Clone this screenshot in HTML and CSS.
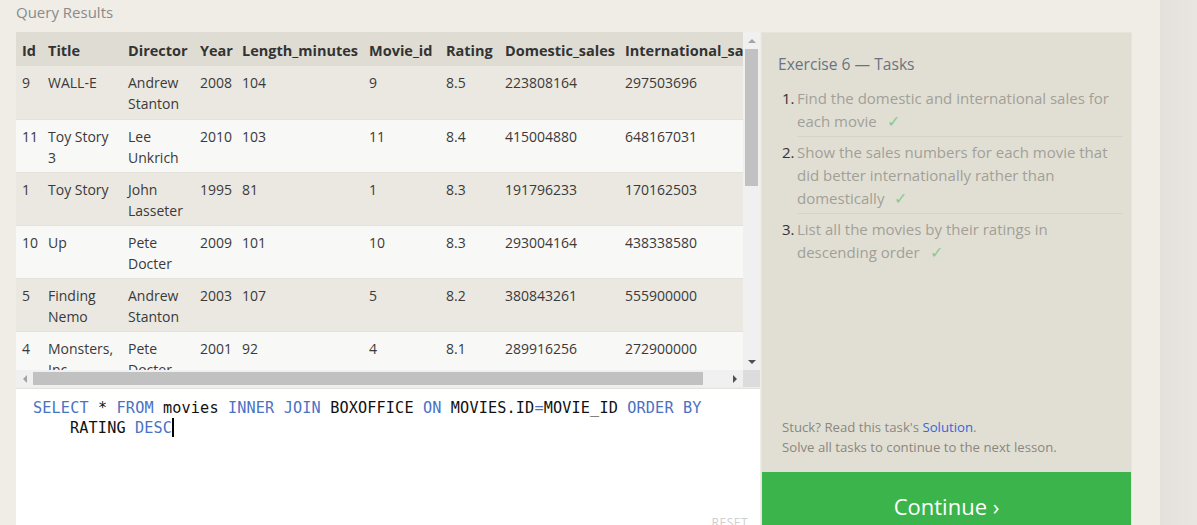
FILE: index.html
```html
<!DOCTYPE html>
<html>
<head>
<meta charset="utf-8">
<link rel="stylesheet" href="styles.css">
</head>
<body>
<div class="page">
  <div class="main">
    <div class="label">Query Results</div>
    <div class="work">
      <div class="left">
        <div class="results">
          <div class="viewport">
            <table class="tbl">
              <colgroup>
                <col style="width:26px"><col style="width:80px"><col style="width:72px"><col style="width:42px"><col style="width:127px"><col style="width:77px"><col style="width:59px"><col style="width:120px"><col style="width:150px">
              </colgroup>
              <thead>
                <tr><th>Id</th><th>Title</th><th>Director</th><th>Year</th><th>Length_minutes</th><th>Movie_id</th><th>Rating</th><th>Domestic_sales</th><th>International_sales</th></tr>
              </thead>
              <tbody>
                <tr><td>9</td><td>WALL-E</td><td>Andrew Stanton</td><td>2008</td><td>104</td><td>9</td><td>8.5</td><td>223808164</td><td>297503696</td></tr>
                <tr><td>11</td><td>Toy Story 3</td><td>Lee Unkrich</td><td>2010</td><td>103</td><td>11</td><td>8.4</td><td>415004880</td><td>648167031</td></tr>
                <tr><td>1</td><td>Toy Story</td><td>John Lasseter</td><td>1995</td><td>81</td><td>1</td><td>8.3</td><td>191796233</td><td>170162503</td></tr>
                <tr><td>10</td><td>Up</td><td>Pete Docter</td><td>2009</td><td>101</td><td>10</td><td>8.3</td><td>293004164</td><td>438338580</td></tr>
                <tr><td>5</td><td>Finding Nemo</td><td>Andrew Stanton</td><td>2003</td><td>107</td><td>5</td><td>8.2</td><td>380843261</td><td>555900000</td></tr>
                <tr><td>4</td><td>Monsters, Inc.</td><td>Pete Docter</td><td>2001</td><td>92</td><td>4</td><td>8.1</td><td>289916256</td><td>272900000</td></tr>
              </tbody>
            </table>
          </div>
          <div class="vbar">
            <div class="arrow up"></div>
            <div class="vtrack"><div class="vthumb"></div></div>
            <div class="arrow down"></div>
          </div>
          <div class="hbar">
            <div class="arrow left-a"></div>
            <div class="htrack"><div class="hthumb"></div></div>
            <div class="arrow right-a"></div>
          </div>
          <div class="corner"></div>
        </div>
        <div class="editor">
          <div class="code"><span class="kw">SELECT</span> * <span class="kw">FROM</span> movies <span class="kw">INNER</span> <span class="kw">JOIN</span> BOXOFFICE <span class="kw">ON</span> MOVIES.ID<span class="kw">=</span>MOVIE_ID <span class="kw">ORDER</span> <span class="kw">BY</span><br><span class="indent">RATING <span class="kw">DESC</span><span class="caret"></span></span></div>
          <div class="reset">RESET</div>
        </div>
      </div>
      <div class="tasks">
        <div class="tasks-body">
          <h2 class="tasks-title">Exercise 6 — Tasks</h2>
          <ol class="task-list">
            <li><span class="tn">1.</span><span class="tt">Find the domestic and international sales for each movie <span class="check">✓</span></span></li>
            <li><span class="tn">2.</span><span class="tt">Show the sales numbers for each movie that did better internationally rather than domestically <span class="check">✓</span></span></li>
            <li><span class="tn">3.</span><span class="tt">List all the movies by their ratings in descending order <span class="check">✓</span></span></li>
          </ol>
        </div>
        <div class="tasks-foot">
          <p>Stuck? Read this task's <a class="sol">Solution</a>.</p>
          <p>Solve all tasks to continue to the next lesson.</p>
        </div>
        <div class="continue">Continue ›</div>
      </div>
    </div>
  </div>
</div>
</body>
</html>
```
FILE: styles.css
```css
html, body { margin: 0; padding: 0; }
body {
  width: 1197px; height: 525px; overflow: hidden;
  background: #efede6;
  font-family: "Open Sans", "Noto Sans", sans-serif;
}
.page { display: flex; height: 525px; }
.main { width: 1132px; padding-left: 16px; box-sizing: border-box; display: flex; flex-direction: column; }
.label { height: 32px; line-height: 24px; font-size: 15px; color: #8a8a8a; }
.work { display: flex; flex: 1; min-height: 0; }
.left { width: 744px; display: flex; flex-direction: column; }
.results {
  display: grid;
  grid-template-columns: 727px 17px;
  grid-template-rows: 338px 17px;
  height: 356px;
  border-bottom: 1px solid #e4e2dc;
}
.viewport { overflow: hidden; background: #f8f8f7; }
.tbl { border-collapse: collapse; table-layout: fixed; width: 753px; font-size: 14px; color: #3a3a3a; }
.tbl th {
  background: #dfddd3; text-align: left; font-weight: 700; color: #333; font-size: 14.5px;
  height: 34px; padding: 2px 0 0 6px; white-space: nowrap; overflow: hidden; box-sizing: border-box;
}
.tbl td {
  vertical-align: top; padding: 6px 4px 0 6px; height: 53px; box-sizing: border-box;
  line-height: 21px; border-bottom: 1px solid #e3e1da;
}
.tbl tbody tr:nth-child(odd) td { background: #eae8e1; }
.tbl tbody tr:nth-child(even) td { background: #f8f8f7; }
.vbar { background: #f0f0f0; display: flex; flex-direction: column; align-items: center; }
.vtrack { flex: 1; width: 100%; padding: 0 2px; box-sizing: border-box; }
.vthumb { height: 137px; background: #c1c1c1; }
.hbar { background: #f0f0f0; display: flex; align-items: center; }
.htrack { flex: 1; height: 100%; padding: 2px 0; box-sizing: border-box; }
.hthumb { width: 670px; height: 100%; background: #c1c1c1; }
.corner { background: #dcdcdc; }
.arrow { width: 17px; height: 17px; position: relative; flex: none; }
.arrow::after { content: ""; position: absolute; left: 50%; top: 50%; width: 0; height: 0; }
.up::after { border-left: 4px solid transparent; border-right: 4px solid transparent; border-bottom: 4px solid #a3a3a3; transform: translate(-50%, -50%); }
.down::after { border-left: 4px solid transparent; border-right: 4px solid transparent; border-top: 4px solid #505050; transform: translate(-50%, -50%); }
.left-a::after { border-top: 4px solid transparent; border-bottom: 4px solid transparent; border-right: 4px solid #a3a3a3; transform: translate(-50%, -50%); }
.right-a::after { border-top: 4px solid transparent; border-bottom: 4px solid transparent; border-left: 4px solid #505050; transform: translate(-50%, -50%); }
.editor {
  flex: 1; background: #fff; position: relative;
  padding: 9px 30px 0 17px;
}
.code {
  font-family: "DejaVu Sans Mono", "Liberation Mono", monospace;
  font-size: 15.2px; line-height: 20px; color: #111; letter-spacing: 0.14px;
  width: 700px;
}
.kw { color: #4a72c4; }
.indent { padding-left: 37px; }
.caret { display: inline-block; width: 2px; height: 19px; background: #000; vertical-align: -4px; }
.reset { position: absolute; right: 12px; bottom: -6px; font-size: 12px; color: #cfcfcf; letter-spacing: 0.5px; }
.tasks {
  width: 371px; margin-left: 1px; background: #e1dfd4;
  border: 1px solid #e6e4dc; border-bottom: none; box-sizing: border-box;
  display: flex; flex-direction: column;
}
.tasks-body { flex: 1; padding: 18px 8px 0 16px; }
.tasks-title { margin: 0 0 10px 0; font-weight: 400; font-size: 15.6px; line-height: 26px; color: #6c7380; }
.task-list { list-style: none; margin: 0; padding: 0 0 0 4px; }
.task-list li { display: flex; font-size: 15px; line-height: 23px; color: #a19f98; }
.tn { width: 15px; flex: none; color: #333; }
.tt { flex: 1; padding-bottom: 3px; }
.task-list li + li .tt { border-top: 1px solid #d5d3ca; padding-top: 4px; }
.task-list li + li .tn { padding-top: 5px; }
.check { color: #8cc891; margin-left: 6px; font-size: 16px; }
.tasks-foot { padding: 0 0 15px 20px; font-size: 13.2px; line-height: 20px; color: #8a8780; }
.tasks-foot p { margin: 0; }
.sol { color: #3566d8; }
.continue {
  height: 53px; background: #3bb54b; color: #fff; text-align: center;
  font-size: 22px; line-height: 1; padding-top: 23px; box-sizing: border-box;
}
.page::after { content: ""; width: 28px; flex: none; }
.page::before { content: ""; order: 2; width: 37px; flex: none; background: linear-gradient(90deg, #e4e1dd, #e9e6e2); }
```
